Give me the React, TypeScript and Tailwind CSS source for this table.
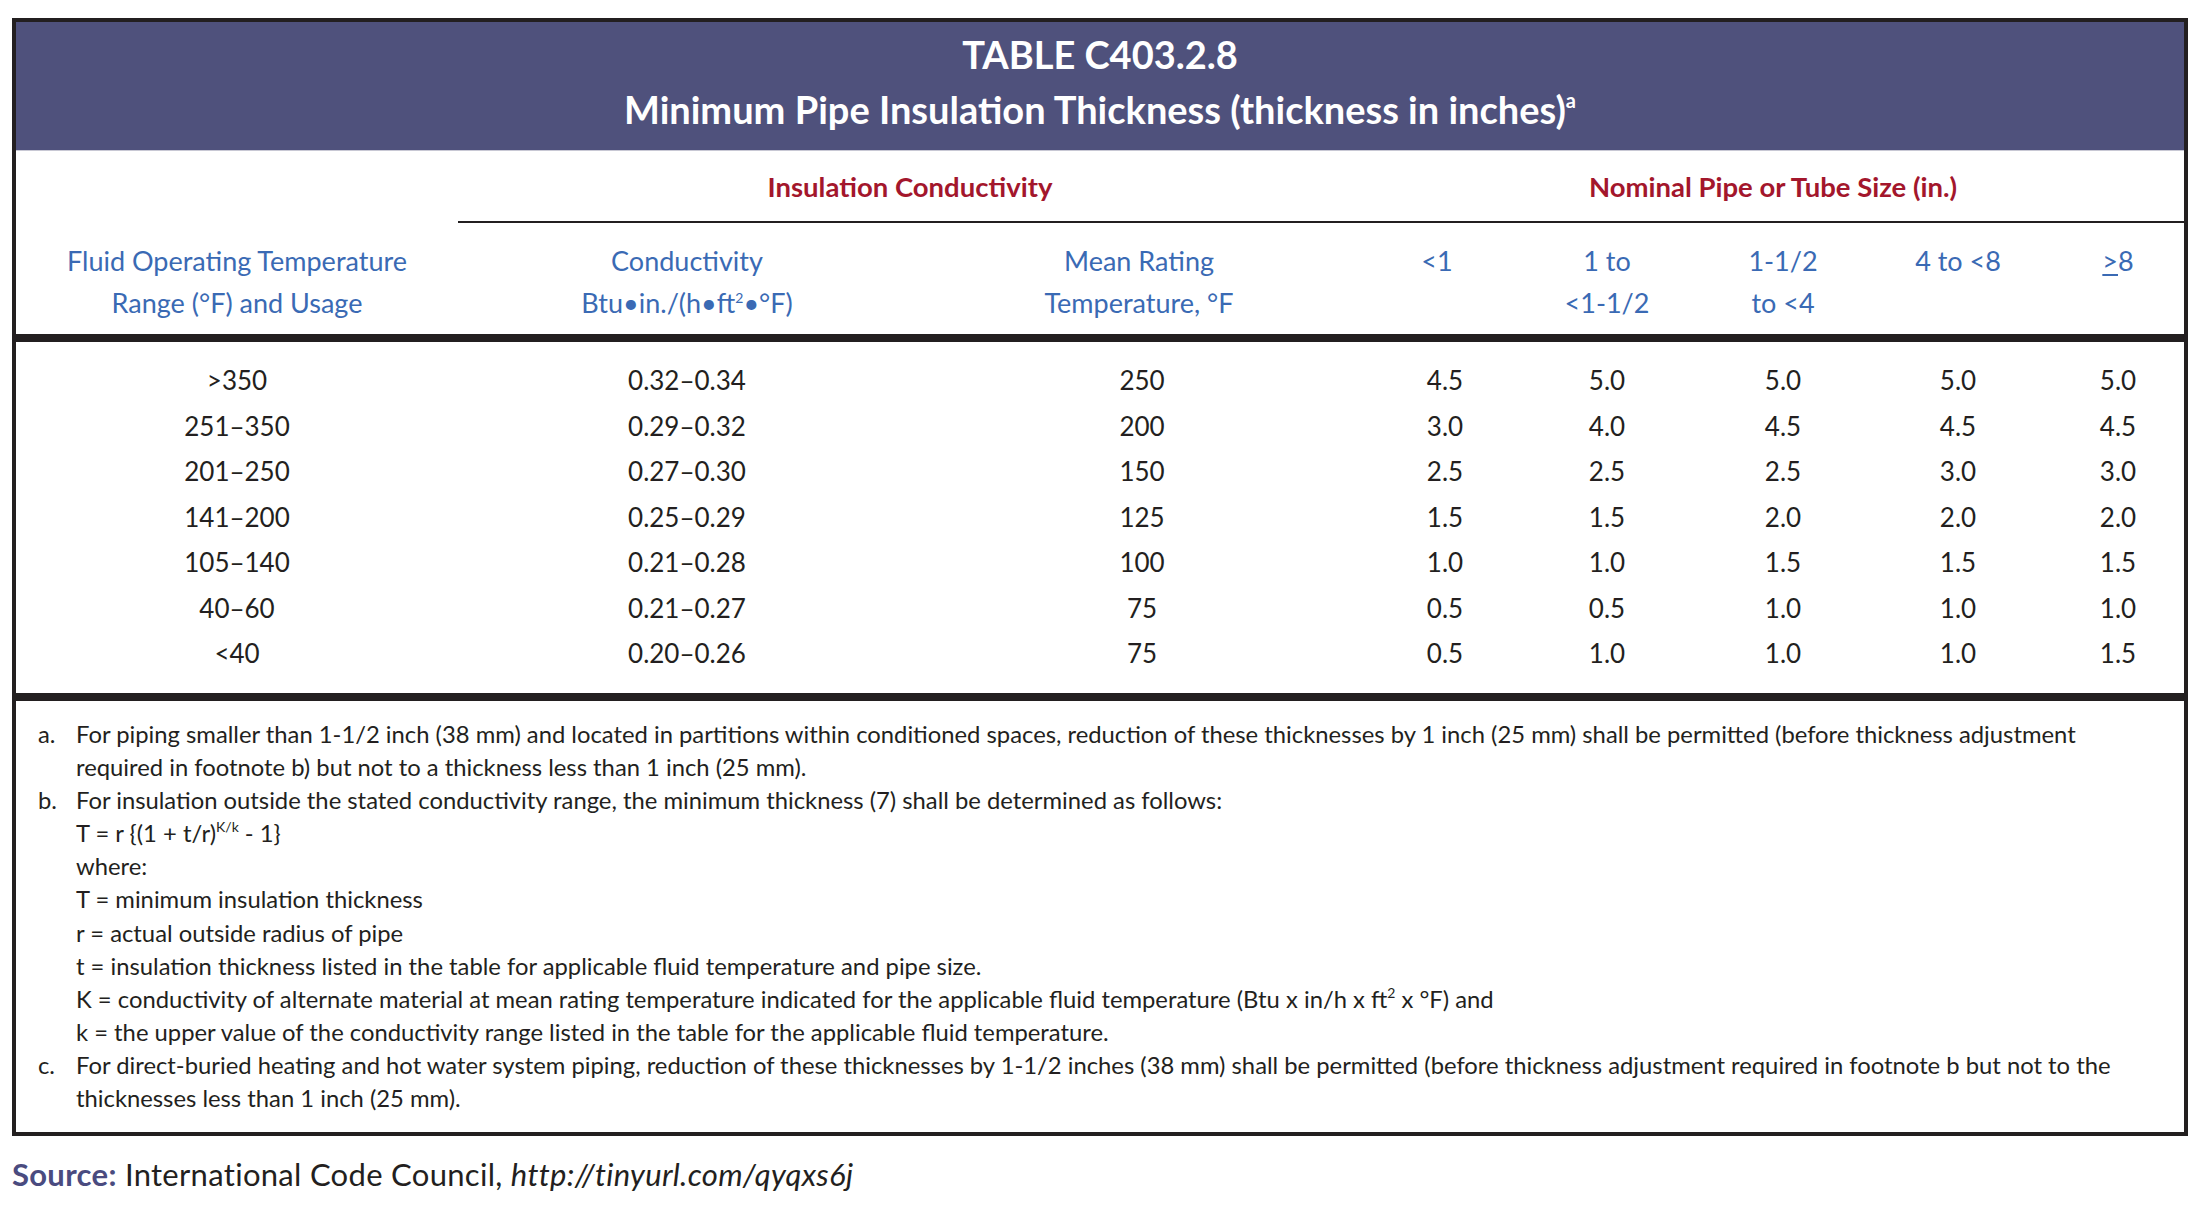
import React from "react";

const cols = "grid grid-cols-[442px_458px_446px_150px_190px_162px_188px_132px]";

const rows = [
  [">350", "0.32–0.34", "250", "4.5", "5.0", "5.0", "5.0", "5.0"],
  ["251–350", "0.29–0.32", "200", "3.0", "4.0", "4.5", "4.5", "4.5"],
  ["201–250", "0.27–0.30", "150", "2.5", "2.5", "2.5", "3.0", "3.0"],
  ["141–200", "0.25–0.29", "125", "1.5", "1.5", "2.0", "2.0", "2.0"],
  ["105–140", "0.21–0.28", "100", "1.0", "1.0", "1.5", "1.5", "1.5"],
  ["40–60", "0.21–0.27", "75", "0.5", "0.5", "1.0", "1.0", "1.0"],
  ["<40", "0.20–0.26", "75", "0.5", "1.0", "1.0", "1.0", "1.5"],
];

// data cells sit a touch off the header centres in a couple of columns
const cellPad = ["", "", "pl-[6px]", "pl-[16px]", "", "", "", ""];

function Note({ label, children }: { label?: string; children: React.ReactNode }) {
  return (
    <div className="flex h-[33.1px] leading-[33.1px] whitespace-nowrap">
      <span className="w-[38px] shrink-0">{label}</span>
      <span>{children}</span>
    </div>
  );
}

export default function App() {
  return (
    <div className="min-h-screen bg-white pt-[18px] pl-[12px] font-['Lato',sans-serif] text-[#231f20]">
      <div className="w-[2176px] border-[4px] border-[#231f20]">
        {/* title band */}
        <div className="bg-[#4f517c] pt-[5px] pb-[13px] h-[128px] text-center text-white font-bold text-[38px] leading-[55px]">
          <div>TABLE C403.2.8</div>
          <div>
            Minimum Pipe Insulation Thickness (thickness in inches)
            <sup className="text-[20px] -top-[16px]">a</sup>
          </div>
        </div>

        {/* column headings */}
        <div className={`${cols} h-[184px] pt-[16px] border-t border-[#c8c8d4]`}>
          <div />
          <div className="col-span-2 text-center font-bold text-[27.5px] leading-[40px] text-[#a3162c]">
            Insulation Conductivity
          </div>
          <div className="col-span-5 text-center font-bold text-[27.5px] leading-[40px] text-[#a3162c]">
            Nominal Pipe or Tube Size (in.)
          </div>
          <div className="col-start-2 col-span-7 h-[2px] bg-[#231f20] mt-[4px]" />
          <div className="col-span-8 grid grid-cols-subgrid mt-[8px] text-[27px] leading-[42px] text-[#3a6ab4] text-center">
            <div>
              Fluid Operating Temperature
              <br />
              Range (°F) and Usage
            </div>
            <div>
              Conductivity
              <br />
              Btu•in./(h•ft<sup className="text-[14px] -top-[10px]">2</sup>•°F)
            </div>
            <div>
              Mean Rating
              <br />
              Temperature, °F
            </div>
            <div>&lt;1</div>
            <div>
              1 to
              <br />
              &lt;1-1/2
            </div>
            <div>
              1-1/2
              <br />
              to &lt;4
            </div>
            <div>4 to &lt;8</div>
            <div>
              <span className="underline underline-offset-[3px]">&gt;</span>8
            </div>
          </div>
        </div>

        <div className="h-[8px] bg-[#231f20]" />

        {/* values */}
        <div className="pt-[16px] pb-[16.5px] text-[26px]">
          {rows.map((r, i) => (
            <div key={i} className={`${cols} h-[45.5px] leading-[45.5px] text-center`}>
              {r.map((v, j) => (
                <div key={j} className={cellPad[j]}>
                  {v}
                </div>
              ))}
            </div>
          ))}
        </div>

        <div className="h-[8px] bg-[#231f20]" />

        {/* footnotes */}
        <div className="h-[431px] pt-[17px] pl-[22px] text-[23.8px]">
          <Note label="a.">
            For piping smaller than 1-1/2 inch (38 mm) and located in partitions within conditioned spaces, reduction
            of these thicknesses by 1 inch (25 mm) shall be permitted (before thickness adjustment
          </Note>
          <Note>required in footnote b) but not to a thickness less than 1 inch (25 mm).</Note>
          <Note label="b.">
            For insulation outside the stated conductivity range, the minimum thickness (7) shall be determined as
            follows:
          </Note>
          <Note>
            T = r {"{"}(1 + t/r)<sup className="text-[14px] -top-[10px]">K/k</sup> - 1{"}"}
          </Note>
          <Note>where:</Note>
          <Note>T = minimum insulation thickness</Note>
          <Note>r = actual outside radius of pipe</Note>
          <Note>t = insulation thickness listed in the table for applicable fluid temperature and pipe size.</Note>
          <Note>
            K = conductivity of alternate material at mean rating temperature indicated for the applicable fluid
            temperature (Btu x in/h x ft<sup className="text-[14px] -top-[10px]">2</sup> x °F) and
          </Note>
          <Note>k = the upper value of the conductivity range listed in the table for the applicable fluid temperature.</Note>
          <Note label="c.">
            For direct-buried heating and hot water system piping, reduction of these thicknesses by 1-1/2 inches (38
            mm) shall be permitted (before thickness adjustment required in footnote b but not to the
          </Note>
          <Note>thicknesses less than 1 inch (25 mm).</Note>
        </div>
      </div>

      <div className="mt-[20px] text-[31px] leading-[36px] tracking-[0.3px]">
        <span className="font-bold text-[#4a4b7f]">Source:</span> International Code Council,{" "}
        <span className="italic">http://tinyurl.com/qyqxs6j</span>
      </div>
    </div>
  );
}
